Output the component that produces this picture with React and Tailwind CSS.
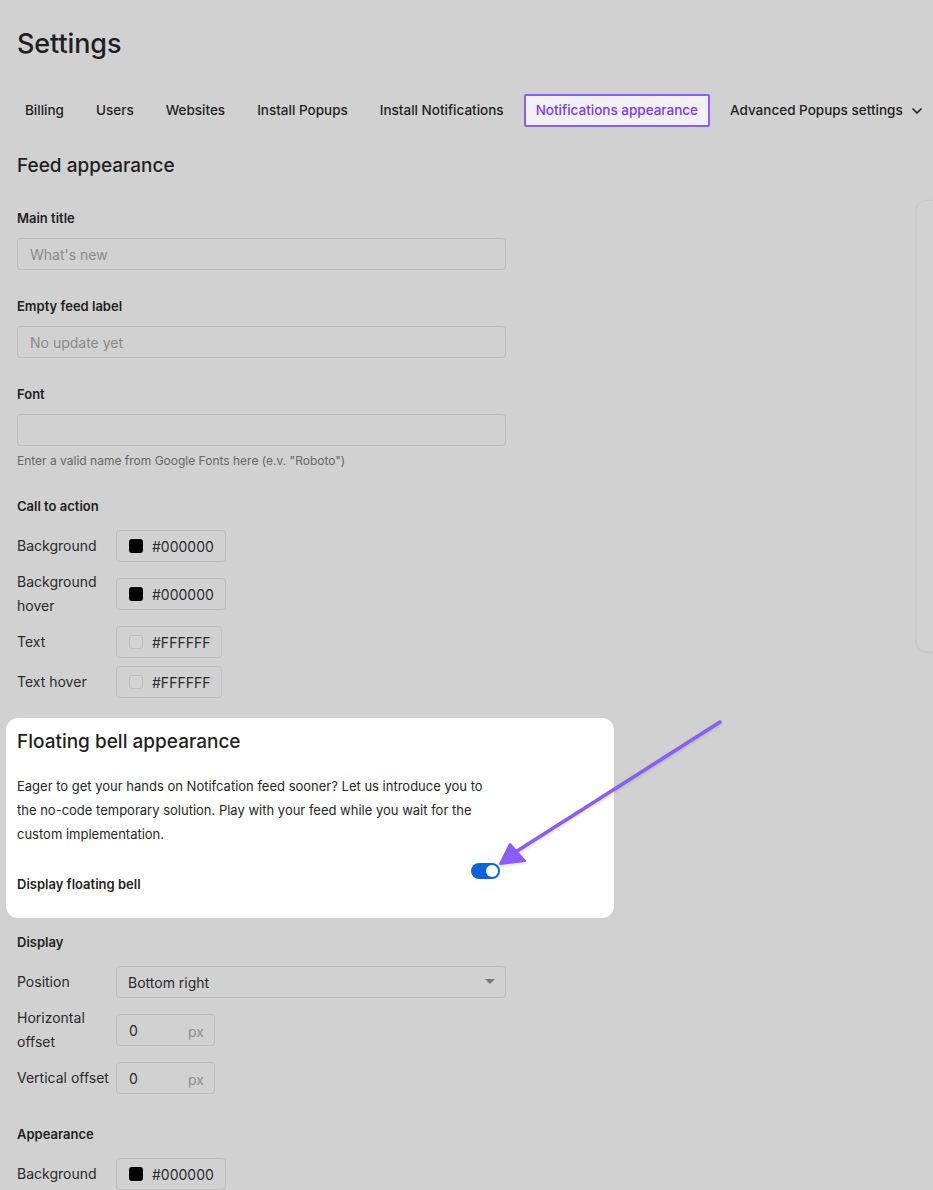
import React from "react";
import { ChevronDown } from "lucide-react";

const font = { fontFamily: "Inter, 'Noto Sans', sans-serif" };

function Swatch({ color }) {
  return (
    <span
      className={
        color === "#000000"
          ? "w-[14px] h-[14px] rounded-[3px] bg-black"
          : "w-[14px] h-[14px] rounded-[3px] bg-[#d3d3d3] border border-[#bdbdbd]"
      }
    />
  );
}

function ColorBox({ value }) {
  return (
    <div className="h-[32px] inline-flex items-center gap-[9px] pl-[12px] pr-[11px] border border-[#bcbcbc] rounded-[4px] text-[14px] text-[#2a2a2a]">
      <Swatch color={value} />
      <span>{value}</span>
    </div>
  );
}

function Row({ label, children }) {
  return (
    <div className="flex items-center">
      <div className="w-[99px] shrink-0 text-[14px] leading-[24px] text-[#2a2a2a]">{label}</div>
      {children}
    </div>
  );
}

function TextInput({ placeholder }) {
  return (
    <div className="w-[489px] h-[32px] border border-[#bcbcbc] rounded-[4px] flex items-center px-[12px] text-[14px] text-[#8a8a8a]">
      {placeholder}
    </div>
  );
}

function PxInput() {
  return (
    <div className="w-[99px] h-[32px] border border-[#bcbcbc] rounded-[4px] flex items-center justify-between pl-[12px] pr-[10px] text-[14px]">
      <span className="text-[#2a2a2a]">0</span>
      <span className="text-[#8f8f8f] mt-[2px]">px</span>
    </div>
  );
}

const tabs = ["Billing", "Users", "Websites", "Install Popups", "Install Notifications"];

export default function App() {
  return (
    <div style={font} className="relative w-full min-h-screen bg-[#d1d1d1] overflow-hidden text-[#1f1f1f]">
      <div className="pl-[17px] pt-[28px]">
        <h1 className="text-[27px] leading-[32px] font-medium tracking-[-0.1px]">Settings</h1>
        <div className="mt-[34px] -ml-[4px] flex flex-nowrap items-center gap-[8px] text-[13.5px] font-medium whitespace-nowrap">
          {tabs.map((t) => (
            <div key={t} className="shrink-0 h-[33px] px-[10px] border-2 border-transparent flex items-center">
              {t}
            </div>
          ))}
          <div className="shrink-0 h-[33px] px-[10px] border-2 border-[#8b5cf6] rounded-[2px] bg-[#f1f0f4] text-[#7c3aed] flex items-center">
            Notifications appearance
          </div>
          <div className="shrink-0 h-[33px] px-[10px] border-2 border-transparent flex items-center gap-[6px]">
            Advanced Popups settings
            <ChevronDown size={16} strokeWidth={2.5} />
          </div>
        </div>
      </div>

      <div className="flex pl-[17px]">
        <div className="w-[899px] shrink-0">
          <h2 className="mt-[27px] text-[19px] leading-[24px] font-medium">Feed appearance</h2>

          <div className="mt-[30px] text-[13px] leading-[20px] font-semibold">Main title</div>
          <div className="mt-[10px]"><TextInput placeholder="What's new" /></div>

          <div className="mt-[26px] text-[13px] leading-[20px] font-semibold">Empty feed label</div>
          <div className="mt-[10px]"><TextInput placeholder="No update yet" /></div>

          <div className="mt-[26px] text-[13px] leading-[20px] font-semibold">Font</div>
          <div className="mt-[10px]"><TextInput placeholder="" /></div>
          <div className="mt-[7px] text-[12px] leading-[16px] text-[#666]">
            Enter a valid name from Google Fonts here (e.v. "Roboto")
          </div>

          <div className="mt-[27px] text-[13px] leading-[20px] font-semibold">Call to action</div>
          <div className="mt-[14px] flex flex-col gap-[8px]">
            <Row label="Background"><ColorBox value="#000000" /></Row>
            <Row label="Background hover"><ColorBox value="#000000" /></Row>
            <Row label="Text"><ColorBox value="#FFFFFF" /></Row>
            <Row label="Text hover"><ColorBox value="#FFFFFF" /></Row>
          </div>

          <div className="mt-[20px] -ml-[11px] w-[608px] bg-white rounded-[12px] pl-[11px] pt-[12px] pb-[24px]">
            <h2 className="text-[19px] leading-[24px] font-medium">Floating bell appearance</h2>
            <p className="mt-[20px] text-[13px] leading-[24px] text-[#262626] whitespace-nowrap">
              Eager to get your hands on Notifcation feed sooner? Let us introduce you to
              <br />
              the no-code temporary solution. Play with your feed while you wait for the
              <br />
              custom implementation.
            </p>
            <div className="mt-[17px] w-[483px] flex justify-between items-start">
              <div className="mt-[11px] text-[13px] leading-[20px] font-semibold">Display floating bell</div>
              <div className="w-[29px] h-[16px] rounded-full bg-[#0b63d6] flex items-center justify-end pr-[2px]">
                <div className="w-[12px] h-[12px] rounded-full bg-white" />
              </div>
            </div>
          </div>

          <div className="mt-[14px] text-[13px] leading-[20px] font-semibold">Display</div>
          <div className="mt-[14px] flex flex-col gap-[8px]">
            <Row label="Position">
              <div className="w-[390px] h-[32px] border border-[#bcbcbc] rounded-[4px] flex items-center justify-between pl-[11px] pr-[10px] text-[14px] text-[#2a2a2a]">
                <span>Bottom right</span>
                <svg width="10" height="6" viewBox="0 0 10 6">
                  <path d="M0 0 L10 0 L5 5 Z" fill="#7a7a7a" />
                </svg>
              </div>
            </Row>
            <Row label="Horizontal offset"><PxInput /></Row>
            <Row label="Vertical offset"><PxInput /></Row>
          </div>

          <div className="mt-[30px] text-[13px] leading-[20px] font-semibold">Appearance</div>
          <div className="mt-[14px] flex flex-col gap-[8px] pb-[20px]">
            <Row label="Background"><ColorBox value="#000000" /></Row>
          </div>
        </div>

        <div className="mt-[73px] h-[452px] w-[60px] shrink-0 rounded-l-[10px] border border-[#c8c8c8] bg-[#d2d2d2] shadow-[0_1px_3px_rgba(0,0,0,0.06)]" />
      </div>

      <svg
        className="absolute left-0 top-0 pointer-events-none"
        width="933"
        height="1190"
        viewBox="0 0 933 1190"
      >
        <defs>
          <filter id="sh" x="-10%" y="-10%" width="120%" height="120%">
            <feDropShadow dx="0" dy="1" stdDeviation="1.5" floodColor="#000" floodOpacity="0.18" />
          </filter>
        </defs>
        <g filter="url(#sh)">
          <line x1="720" y1="722" x2="514" y2="853" stroke="#8b5cf6" strokeWidth="3.5" strokeLinecap="round" />
          <path d="M500 864 L510 844 L525 861 Z" fill="#8b5cf6" stroke="#8b5cf6" strokeWidth="2" strokeLinejoin="round" />
        </g>
      </svg>
    </div>
  );
}
